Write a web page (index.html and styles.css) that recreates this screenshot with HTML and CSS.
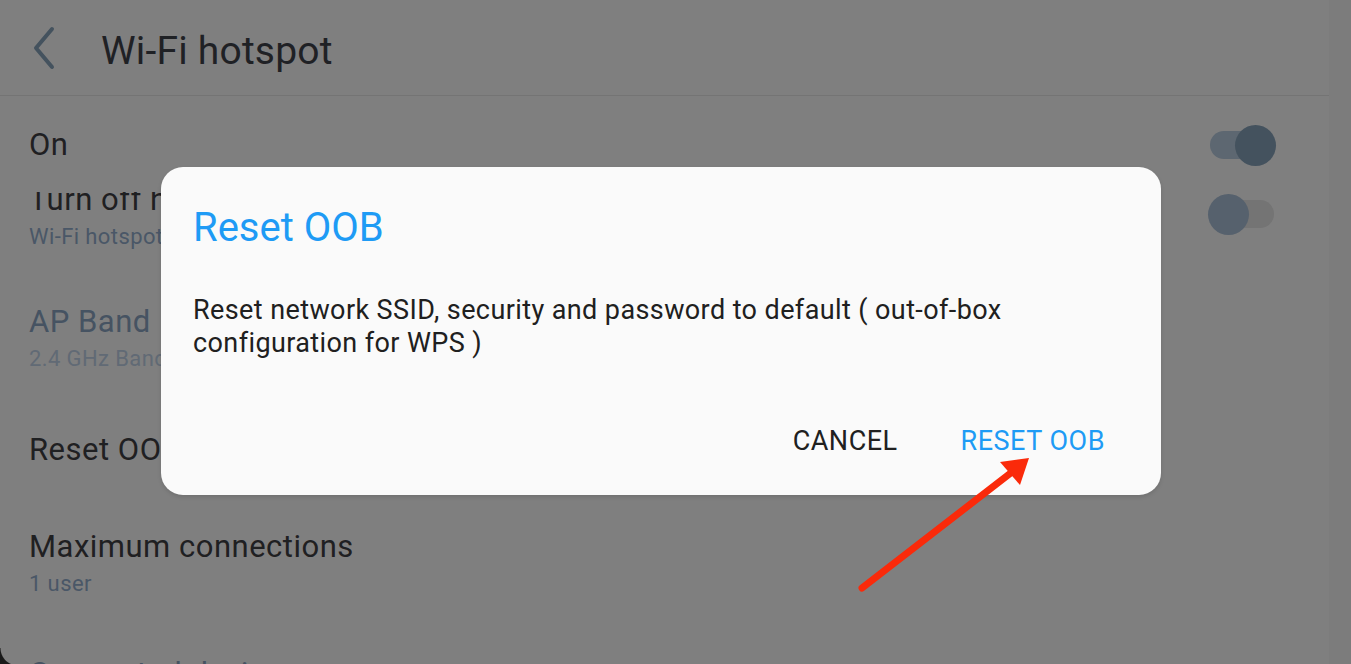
FILE: index.html
```html
<!DOCTYPE html>
<html lang="en">
<head>
<meta charset="utf-8">
<title>Wi-Fi hotspot</title>
<link rel="stylesheet" href="styles.css">
</head>
<body>
<div class="device">
  <div class="screen">
    <header class="appbar">
      <svg class="back" width="30" height="44" viewBox="0 0 30 44" aria-hidden="true">
        <path d="M22 3 L6 22 L22 41" fill="none" stroke="#44525e" stroke-width="4" stroke-linecap="round" stroke-linejoin="round"/>
      </svg>
      <h1 class="appbar-title">Wi-Fi hotspot</h1>
    </header>

    <div class="list">
      <div class="item item-on">
        <div class="item-text"><div class="item-title">On</div></div>
        <span class="switch switch-on"><span class="knob"></span></span>
      </div>
      <div class="item item-turnoff">
        <div class="item-text">
          <div class="item-title clipped">Turn off hotspot automatically</div>
          <div class="item-sub">Wi-Fi hotspot will turn off when no devices are connected</div>
        </div>
        <span class="switch switch-off"><span class="knob"></span></span>
      </div>
      <div class="item item-band">
        <div class="item-text">
          <div class="item-title disabled">AP Band</div>
          <div class="item-sub faded">2.4 GHz Band</div>
        </div>
      </div>
      <div class="item item-reset">
        <div class="item-text"><div class="item-title">Reset OOB</div></div>
      </div>
      <div class="item item-max">
        <div class="item-text">
          <div class="item-title">Maximum connections</div>
          <div class="item-sub">1 user</div>
        </div>
      </div>
      <div class="item item-connected">
        <div class="item-text"><div class="item-title disabled">Connected devices</div></div>
      </div>
    </div>

    <div class="corner"></div>

    <div class="dialog" role="dialog">
      <h2 class="dialog-title">Reset OOB</h2>
      <p class="dialog-body">Reset network SSID, security and password to default ( out-of-box configuration for WPS )</p>
      <div class="dialog-actions">
        <button class="btn">CANCEL</button>
        <button class="btn btn-primary">RESET OOB</button>
      </div>
    </div>

    <svg class="arrow" width="1351" height="664" viewBox="0 0 1351 664" aria-hidden="true">
      <line x1="862" y1="588" x2="1012" y2="472" stroke="#fa2a0a" stroke-width="7" stroke-linecap="round"/>
      <polygon points="1029,458 1000,462 1020,485" fill="#fa2a0a"/>
    </svg>
  </div>
  <div class="edge"></div>
</div>
</body>
</html>
```

FILE: styles.css
```css
* { box-sizing: border-box; }

html, body {
  margin: 0;
  padding: 0;
  width: 1351px;
  height: 664px;
  overflow: hidden;
  background: #7d7d7d;
  font-family: Roboto, "Noto Sans", "Liberation Sans", sans-serif;
}

.device {
  display: flex;
  width: 1351px;
  height: 664px;
}

.screen {
  position: relative;
  width: 1329px;
  height: 664px;
  background: #7f7f7f;
  overflow: hidden;
}

.edge {
  flex: 1;
  background: #7c7c7c;
}

.appbar {
  display: flex;
  align-items: flex-start;
  height: 96px;
  padding-left: 30px;
  border-bottom: 1px solid #747474;
}

.back {
  display: block;
  margin-top: 26px;
}

.appbar-title {
  margin: 29px 0 0 41px;
  font-weight: 400;
  font-size: 39px;
  line-height: 44px;
  letter-spacing: 0.2px;
  color: #1f2125;
}

.list {
  display: flex;
  flex-direction: column;
  padding: 0 55px 0 29px;
}

.item {
  display: flex;
  align-items: center;
  justify-content: space-between;
}

.item-title {
  font-size: 31px;
  line-height: 40px;
  letter-spacing: 0.5px;
  color: #1f2022;
  white-space: nowrap;
}

.item-title.disabled { color: #465362; }
.item-title.clipped { clip-path: inset(12px 0 0 0); }

.item-sub {
  font-size: 22px;
  line-height: 34px;
  letter-spacing: 0.4px;
  color: #4a5767;
  white-space: nowrap;
}

.item-sub.faded { color: #616a75; }

.item-on { margin-top: 29px; }
.item-turnoff { margin-top: 15px; }
.item-band { margin-top: 48px; }
.item-reset { margin-top: 54px; }
.item-max { margin-top: 57px; }
.item-connected { margin-top: 53px; }

.switch {
  position: relative;
  width: 64px;
  height: 28px;
  border-radius: 14px;
  flex: none;
}

.switch .knob {
  position: absolute;
  top: -6px;
  width: 41px;
  height: 41px;
  border-radius: 50%;
}

.switch-on { background: #5d6771; }
.switch-on .knob { right: -2px; background: #44525e; }

.switch-off { background: #747474; margin-top: -6px; }
.switch-off .knob { left: -2px; background: #56616d; }

.corner {
  position: absolute;
  left: 0;
  bottom: 0;
  width: 18px;
  height: 16px;
  background: radial-gradient(circle at 100% 0, transparent 17px, #1a1a1a 18px);
}

.dialog {
  position: absolute;
  left: 161px;
  top: 167px;
  width: 1000px;
  height: 328px;
  background: #fafafa;
  border-radius: 22px;
  box-shadow: 0 2px 4px rgba(0, 0, 0, 0.12);
  padding: 36px 56px 34px 32px;
  display: flex;
  flex-direction: column;
}

.dialog-title {
  margin: 0;
  font-weight: 400;
  font-size: 40px;
  line-height: 50px;
  color: #1e9bf5;
}

.dialog-body {
  margin: 41px 0 0 0;
  font-size: 27px;
  line-height: 33px;
  letter-spacing: 0.4px;
  color: #202020;
}

.dialog-actions {
  margin-top: auto;
  display: flex;
  justify-content: flex-end;
  gap: 63px;
}

.btn {
  border: 0;
  background: none;
  padding: 0;
  font-family: inherit;
  font-size: 27px;
  line-height: 40px;
  letter-spacing: 0.5px;
  color: #202020;
}

.btn-primary { color: #1e9bf5; }

.arrow {
  position: absolute;
  left: 0;
  top: 0;
  pointer-events: none;
}
```
